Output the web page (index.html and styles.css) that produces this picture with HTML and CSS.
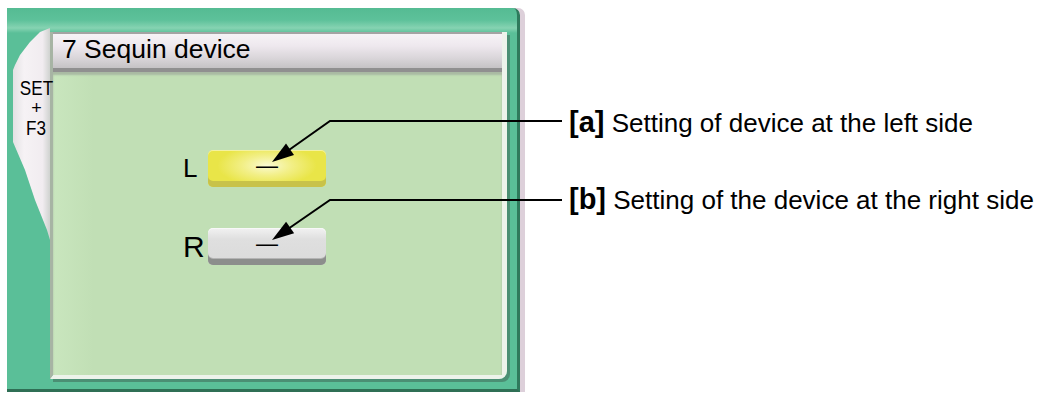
FILE: index.html
```html
<!DOCTYPE html>
<html>
<head>
<meta charset="utf-8">
<title>7 Sequin device</title>
<link rel="stylesheet" href="styles.css">
</head>
<body>
<div class="page">
    <div class="panel">
        <div class="side">
            <div class="tab">
                <span class="key">SET</span>
                <span class="plus">+</span>
                <span class="key key-f">F3</span>
            </div>
        </div>
        <div class="screen">
            <div class="title">7 Sequin device</div>
            <div class="body">
                <div class="row">
                    <span class="lbl">L</span>
                    <button class="val yellow" type="button">—</button>
                </div>
                <div class="row">
                    <span class="lbl lbl-r">R</span>
                    <button class="val grey" type="button">—</button>
                </div>
            </div>
        </div>
    </div>

    <div class="notes">
        <div class="note"><b>[a]</b> Setting of device at the left side</div>
        <div class="note"><b>[b]</b> Setting of the device at the right side</div>
    </div>

    <!-- leader lines -->
    <svg class="leaders" width="1048" height="394" viewBox="0 0 1048 394">
        <path d="M562 121 H330 L284 153.5" fill="none" stroke="#000" stroke-width="2"/>
        <polygon points="272,162 294,155 286,143.6" fill="#000"/>
        <path d="M562 200 H330 L284 231.7" fill="none" stroke="#000" stroke-width="2"/>
        <polygon points="272,240 294.1,233.3 286.1,221.7" fill="#000"/>
    </svg>
</div>
</body>
</html>
```

FILE: styles.css
```css
body {
    margin: 0;
    background: #fff;
    font-family: "Liberation Sans", Arial, Helvetica, sans-serif;
    color: #000;
}
.page {
    position: relative;
    width: 1048px;
    height: 394px;
    display: flex;
    align-items: flex-start;
}

/* green frame */
.panel {
    display: flex;
    width: 510px;
    height: 381px;
    margin: 8px 0 0 7px;
    background: linear-gradient(180deg, #55bb93 0, #5dc19a 12px, #86d3b2 20px, #5abf98 25px, #5abf98 100%);
    border-right: 3px solid #2f7a5c;
    border-bottom: 3px solid #2f6f55;
    border-top-right-radius: 7px;
    box-shadow: 5px 0 0 #ddd0da;
}
.side {
    width: 43px;
    padding-top: 18px;
    flex-shrink: 0;
    position: relative;
    z-index: 1;
}
.tab {
    position: relative;
    margin-left: 6px;
    width: 37px;
    height: 214px;
    box-sizing: border-box;
    padding: 53px 0 0 10px;
    display: flex;
    flex-direction: column;
    align-items: center;
    font-size: 19px;
}
.tab::before {
    content: "";
    position: absolute;
    left: 0;
    top: 0;
    right: 0;
    bottom: 0;
    z-index: -1;
    background: linear-gradient(90deg, #e3e1e3 0, #f6f2f5 30%, #f1ecf0 80%, #cfd2cf 100%);
    clip-path: polygon(37px 0, 37px 214px, 34px 204px, 22px 174px, 12px 144px, 6px 130px, 0 116px, 0 44px, 2px 39px, 7px 29px, 17px 16px, 27px 6px, 37px 2px);
}
.tab .key {
    display: block;
    height: 20px;
    line-height: 20px;
    transform: scale(0.9, 1.05);
    white-space: nowrap;
}
.tab .plus {
    display: block;
    height: 18px;
    font-size: 18px;
    line-height: 18px;
}
.tab .key-f {
    margin-top: 2px;
}

/* screen area */
.screen {
    display: flex;
    flex-direction: column;
    width: 449px;
    margin: 24px 10px 10px 0;
    border-left: 3px solid #a7b4a4;
    border-right: 5px solid #edf3eb;
    border-bottom: 4px solid #edf3eb;
    border-bottom-right-radius: 8px;
    box-shadow: 3px 3px 0 #4b8f74;
}
.title {
    height: 40px;
    box-sizing: border-box;
    padding: 0 0 0 9px;
    border-top: 2px solid #a3a3a3;
    border-bottom: 4px solid #909090;
    background: linear-gradient(180deg, #f6f3f6 0, #eee8ee 35%, #dad6da 70%, #c5c3c5 100%);
    font-size: 26.5px;
    line-height: 30px;
}
.body {
    flex: 1;
    padding: 78px 0 0 130px;
    background: linear-gradient(90deg, #c9e6be 0, #c1dfb5 40px, #c1dfb5 100%);
    box-shadow: inset 0 3px 2px #a9baa3;
    display: flex;
    flex-direction: column;
    gap: 41px;
}
.row {
    display: flex;
    align-items: center;
    height: 37px;
}
.lbl {
    width: 25px;
    font-size: 26px;
    line-height: 37px;
}
.lbl-r {
    font-size: 30px;
}
.val {
    width: 118px;
    height: 37px;
    border: 0;
    border-radius: 5px;
    padding: 0 0 5px 0;
    font-family: inherit;
    font-size: 22px;
    line-height: 32px;
    color: #000;
}
.yellow {
    background: radial-gradient(ellipse 42% 55% at 50% 42%, #fafad2 0, #f2ef86 50%, #e9e548 100%);
    box-shadow: inset 0 -6px 0 #c8c24a, inset 0 1px 0 #f4f2a0;
}
.grey {
    background: linear-gradient(180deg, #f2f2f2 0, #dfdfdf 30%, #dadada 100%);
    box-shadow: inset 0 -6px 0 #8c8e8c, inset 0 -7px 0 #b4b4b4, inset 0 1px 0 #f8f8f8;
}

/* annotations */
.notes {
    display: flex;
    flex-direction: column;
    gap: 46px;
    margin-left: 49px;
    padding-top: 107px;
}
.note {
    font-size: 26px;
    line-height: 30px;
    white-space: nowrap;
}
.note b {
    font-size: 29px;
}
.leaders {
    position: absolute;
    left: 0;
    top: 0;
    pointer-events: none;
}
```
